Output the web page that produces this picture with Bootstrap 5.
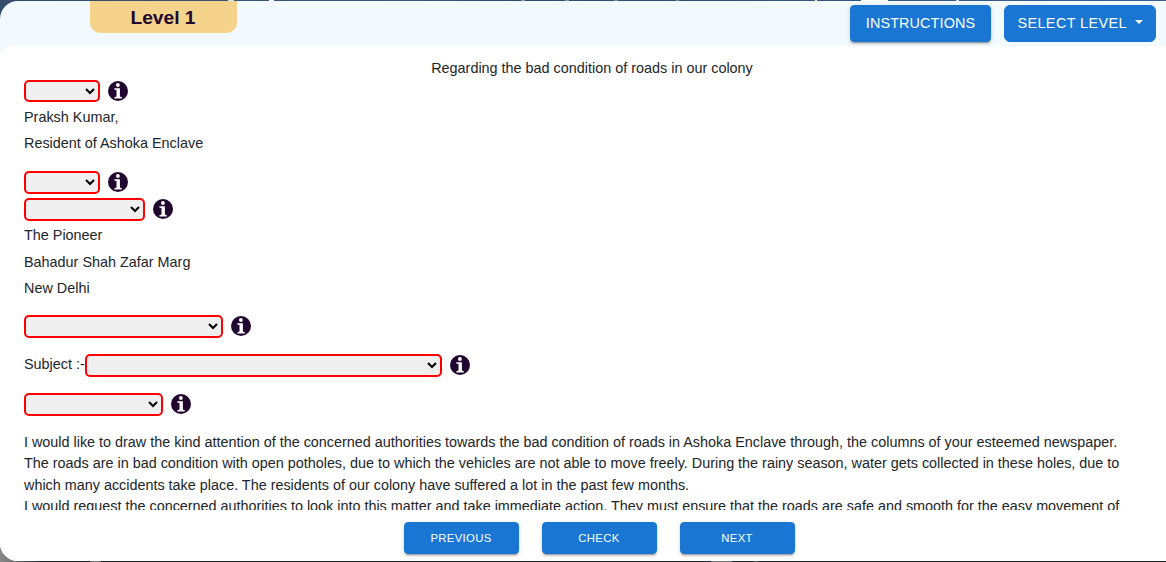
<!DOCTYPE html>
<html lang="en">
<head>
<meta charset="utf-8">
<meta name="viewport" content="width=device-width, initial-scale=1">
<title>Level 1</title>
<link href="https://cdn.jsdelivr.net/npm/bootstrap@5.3.0/dist/css/bootstrap.min.css" rel="stylesheet">
<style>
body{height:562px;padding:1px 0;font-family:"Liberation Sans",Arial,sans-serif;font-size:14.4px;line-height:21.6px;color:#212529;
 background:
  linear-gradient(90deg,transparent 228px,#dce4ef 228px 234px,transparent 234px 269px,#fff 269px 274px,transparent 274px 521px,#8790a2 521px 525px,transparent 525px 565px,#8790a2 565px 569px,transparent 569px 614px,#8790a2 614px 618px,transparent 618px 676px,#8790a2 676px 679px,transparent 679px 815px,#fff 815px 817px,transparent 817px 861px,#fff 861px 888px,transparent 888px 956px,#d5dee9 956px 959px,transparent 959px) 0 0/100% 1px no-repeat,
  linear-gradient(90deg,transparent 90px,#777 90px 101px,transparent 101px 711px,#777 711px 732px,transparent 732px 754px,#555 754px 758px,transparent 758px) 0 100%/100% 1px no-repeat,
  linear-gradient(90deg,#344c6d,#365780 35%,#2d4a6d 45%,#36618f) 0 0/100% 30px no-repeat,
  linear-gradient(90deg,#888 0,#777 12px,#20222c 40px,#20222c) 0 100%/100% 40px no-repeat #20222c}
.panel{height:560px;background:#f2faff;border-radius:18px 0 0 18px}
.topbar{height:45px;padding:4px 10px 0 90px}
.level-tag{width:147px;height:32px;margin-top:-4px;padding-right:1px;background:#f5d38b;color:#21062f;border-radius:0 0 10px 10px;font-size:19.2px;line-height:33px}
.btn-blue{--bs-btn-color:#fff;--bs-btn-bg:#1976d2;--bs-btn-border-color:#1976d2;--bs-btn-hover-color:#fff;--bs-btn-hover-bg:#1565c0;--bs-btn-padding-x:0;--bs-btn-padding-y:0;--bs-btn-border-radius:4px}
.raised{box-shadow:0 3px 1px -2px rgba(0,0,0,.2),0 2px 2px rgba(0,0,0,.14),0 1px 5px rgba(0,0,0,.12)}
.head-btn{height:37px;font-size:14.4px;letter-spacing:.13px}
.instructions{width:141px}
.levels{width:152px;margin-left:13px;letter-spacing:.43px;--bs-btn-border-radius:6px;--bs-btn-border-color:#1a73e0}
.sheet{height:515px;border-radius:14px 0 0 18px}
.letter{height:464px;padding:12px 6px 0 24px}
.line{height:26.4px;line-height:26.4px}
.pick{height:27px}
.gap-above{margin-top:12px}
.pick select{height:23px;padding:0;border:2px solid red;border-radius:5px;background:#efefef;color:#000;font-size:14.4px}
.pick svg{width:20px;height:20px;margin-left:8px;flex:none}
.first-pick{height:24px;padding-bottom:2px}
.first-pick select{height:22px}
.lowered{padding-top:1.2px}
.w-a{width:76px}.w-b{width:121px}.w-c{width:199px}.w-d{width:357px}.w-e{width:139px}
.body-text{margin-top:14px;font-size:14.385px}
.actions{gap:23px;padding:12px 0 0 33px}
.actions .btn{width:115px;height:32px;font-size:11.3px;letter-spacing:.35px;padding-right:1px}
</style>
</head>
<body class="overflow-hidden">
<svg class="d-none">
<symbol id="info" viewBox="0 0 20 20"><circle cx="10" cy="10" r="10" fill="#21062f"/><circle cx="9.9" cy="4" r="1.9" fill="#fff"/><path fill="#fff" d="M6.3 7.2h5.6v8.4l1.9.6v1.2H6.4v-1.2l2.1-.6V8.9l-2.2-.4z"/></symbol>
</svg>
<main class="panel">
<header class="topbar d-flex align-items-start">
<div class="level-tag fw-bold text-center">Level 1</div>
<button class="btn btn-blue head-btn raised instructions ms-auto">INSTRUCTIONS</button>
<button class="btn btn-blue head-btn levels dropdown-toggle" data-bs-toggle="dropdown">SELECT LEVEL </button>
</header>
<section class="sheet bg-white">
<div class="letter overflow-hidden">
<div class="text-center">Regarding the bad condition of roads in our colony</div>
<div class="pick first-pick d-flex align-items-center"><select class="w-a"></select><svg><use href="#info"/></svg></div>
<div class="line">Praksh Kumar,</div>
<div class="line">Resident of Ashoka Enclave</div>
<div class="pick gap-above d-flex align-items-center lowered"><select class="w-a"></select><svg><use href="#info"/></svg></div>
<div class="pick d-flex align-items-center lowered"><select class="w-b"></select><svg><use href="#info"/></svg></div>
<div class="line">The Pioneer</div>
<div class="line">Bahadur Shah Zafar Marg</div>
<div class="line">New Delhi</div>
<div class="pick d-flex align-items-center" style="margin-top:11px"><select class="w-c"></select><svg><use href="#info"/></svg></div>
<div class="pick gap-above d-flex align-items-center">Subject :-<select class="w-d"></select><svg><use href="#info"/></svg></div>
<div class="pick gap-above d-flex align-items-center"><select class="w-e"></select><svg><use href="#info"/></svg></div>
<div class="text-nowrap body-text">I would like to draw the kind attention of the concerned authorities towards the bad condition of roads in Ashoka Enclave through, the columns of your esteemed newspaper.<br>The roads are in bad condition with open potholes, due to which the vehicles are not able to move freely. During the rainy season, water gets collected in these holes, due to<br>which many accidents take place. The residents of our colony have suffered a lot in the past few months.<br>I would request the concerned authorities to look into this matter and take immediate action. They must ensure that the roads are safe and smooth for the easy movement of</div>
</div>
<footer class="actions d-flex justify-content-center">
<button class="btn btn-blue raised">PREVIOUS</button>
<button class="btn btn-blue raised">CHECK</button>
<button class="btn btn-blue raised">NEXT</button>
</footer>
</section>
</main>
<script src="https://cdn.jsdelivr.net/npm/bootstrap@5.3.0/dist/js/bootstrap.bundle.min.js"></script>
</body>
</html>
